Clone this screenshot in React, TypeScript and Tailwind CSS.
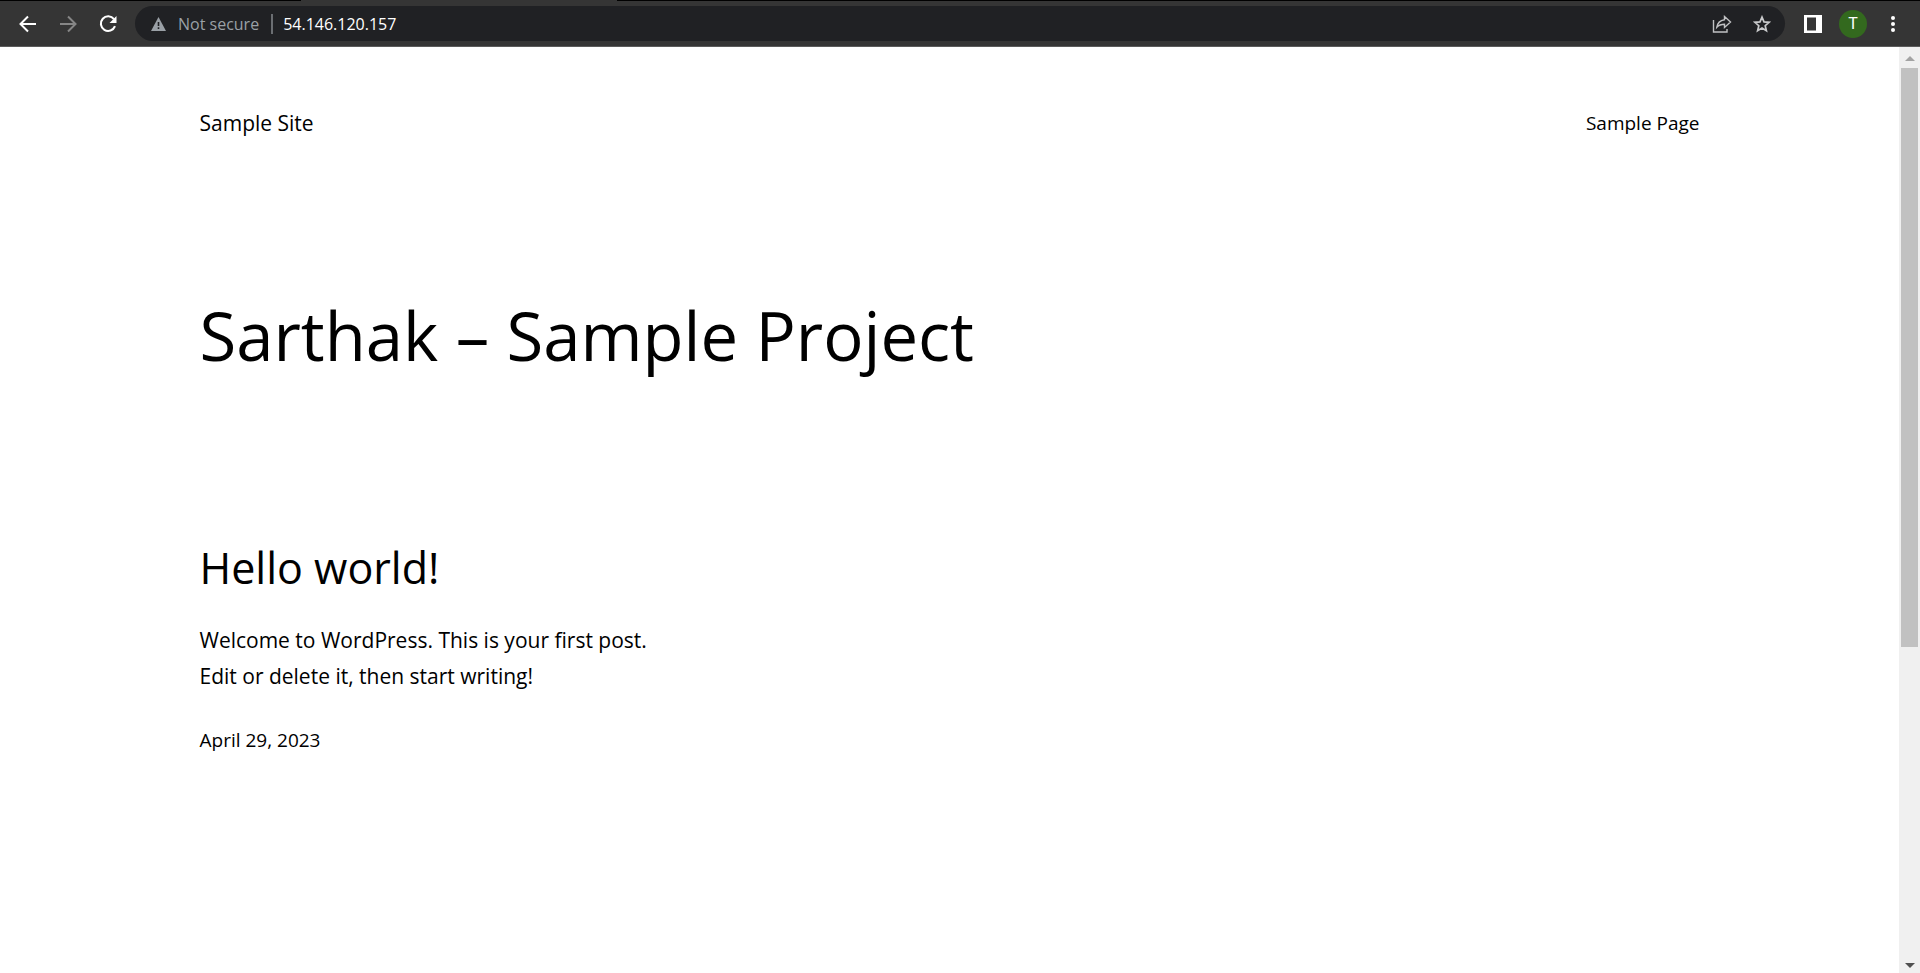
import type { ReactNode } from "react";

function IconButton({ label, children }: { label: string; children: ReactNode }) {
  return (
    <button type="button" aria-label={label} className="flex size-8 items-center justify-center">
      {children}
    </button>
  );
}

function TabStrip() {
  return (
    <div className="flex h-px bg-black">
      <div className="ml-[301px] w-[316px] bg-[#353535]" />
    </div>
  );
}

function Toolbar() {
  return (
    <div className="flex h-[46px] items-center border-b border-[#5b5b5b] bg-[#353535] pr-[11px] pl-3">
      <div className="flex gap-2">
        <IconButton label="Back">
          <svg width="18" height="18" viewBox="0 0 18 18" fill="none" stroke="#fff" strokeWidth="2">
            <path d="M17 9H2M9 1.5 1.5 9 9 16.5" />
          </svg>
        </IconButton>
        <IconButton label="Forward">
          <svg width="18" height="18" viewBox="0 0 18 18" fill="none" stroke="#868686" strokeWidth="2">
            <path d="M1 9h15M9 1.5 16.5 9 9 16.5" />
          </svg>
        </IconButton>
        <IconButton label="Reload">
          <svg width="18" height="18" viewBox="0 0 18 18">
            <path d="M15 4.2A7.3 7.3 0 1 0 16 11.2" fill="none" stroke="#fff" strokeWidth="2.1" />
            <path d="M17.5 1v7h-7z" fill="#fff" />
          </svg>
        </IconButton>
      </div>

      <div className="ml-[11px] flex h-[35px] flex-1 items-center rounded-full bg-[#202124] pr-[7px] pl-4">
        <svg width="15" height="14" viewBox="0 0 15 14" aria-hidden="true">
          <path d="M7.5 0 15 14H0z" fill="#9aa0a6" />
          <path d="M6.7 5h1.6v4H6.7zM6.7 10.3h1.6v1.6H6.7z" fill="#202124" />
        </svg>
        <span className="ml-3 text-[16px] whitespace-nowrap text-[#9aa0a6]">Not secure</span>
        <span className="mr-[10px] ml-3 h-5 w-0.5 bg-[#6b6e72]" />
        <input
          aria-label="Address"
          defaultValue="54.146.120.157"
          className="min-w-0 flex-1 bg-transparent text-[16px] text-white outline-none"
        />
        <div className="flex gap-2">
          <IconButton label="Share this page">
            <svg width="20" height="18" viewBox="0 0 20 18" fill="none" stroke="#c0c1c3" strokeWidth="1.4">
              <path d="M1.5 5v12H15v-3" />
              <path d="M12.5 1.5 18.5 7l-6 5.5V9.3C9.2 9.3 7 10 4.800 12.4 5.4 8.3 8 5.3 12.5 4.7z" />
            </svg>
          </IconButton>
          <IconButton label="Bookmark this page">
            <svg width="18" height="18" viewBox="0 0 18 18" fill="none" stroke="#c8c9cb" strokeWidth="1.7">
              <path d="m9 2.1 2 4.8 5.1.4-3.9 3.4 1.2 5L9 13l-4.4 2.7 1.2-5-3.9-3.4L7 6.9z" />
            </svg>
          </IconButton>
        </div>
      </div>

      <div className="ml-3 flex gap-2">
        <IconButton label="Side panel">
          <svg width="18" height="18" viewBox="0 0 18 18">
            <path d="M0 0h18v18H0zM3 2.500v13h9v-13z" fill="#fff" fillRule="evenodd" />
          </svg>
        </IconButton>
        <IconButton label="Profile">
          <span className="flex size-7 shrink-0 items-center justify-center rounded-full bg-[#33691e] font-[Roboto,sans-serif] text-[16px] text-white">
            T
          </span>
        </IconButton>
        <IconButton label="Menu">
          <svg width="4" height="16" viewBox="0 0 4 16" fill="#fff">
            <circle cx="2" cy="2" r="2" />
            <circle cx="2" cy="8" r="2" />
            <circle cx="2" cy="14" r="2" />
          </svg>
        </IconButton>
      </div>
    </div>
  );
}

function Scrollbar() {
  return (
    <div aria-hidden="true" className="flex w-[21px] shrink-0 flex-col bg-[#f0f0f0] pr-0.5 pl-0.5">
      <div className="flex h-[21px] items-center justify-center pt-0.5">
        <svg width="10" height="5" viewBox="0 0 10 5">
          <path d="M5 0l5 5H0z" fill="#a3a3a3" />
        </svg>
      </div>
      <div className="flex-1">
        <div className="h-[65%] bg-[#c1c1c1]" />
      </div>
      <div className="flex h-[15px] items-center justify-center">
        <svg width="10" height="5" viewBox="0 0 10 5">
          <path d="M0 0h10L5 5z" fill="#505050" />
        </svg>
      </div>
    </div>
  );
}

export default function App() {
  return (
    <div className="flex min-h-screen flex-col bg-white font-['Segoe_UI','Open_Sans',sans-serif] text-black">
      <TabStrip />
      <Toolbar />
      <div className="flex flex-1">
        <div className="flex-1 px-8">
          <div className="mx-auto max-w-[1500px]">
            <header className="flex items-center justify-between pt-[58px]">
              <a href="#home" className="text-[21px] leading-9">Sample Site</a>
              <nav>
                <a href="#sample-page" className="text-[19px] leading-8">Sample Page</a>
              </nav>
            </header>
            <main>
              <h1 className="mt-[152px] text-[67px] leading-[84px]">Sarthak – Sample Project</h1>
              <article className="mt-[161px] max-w-[480px]">
                <h2 className="text-[43px] leading-[60px]">
                  <a href="#hello-world">Hello world!</a>
                </h2>
                <p className="mt-6 text-[21px] leading-9">
                  Welcome to WordPress. This is your first post. Edit or delete it, then start writing!
                </p>
                <a href="#hello-world" className="mt-[30px] block text-[19px] leading-8">
                  <time dateTime="2023-04-29">April 29, 2023</time>
                </a>
              </article>
            </main>
          </div>
        </div>
        <Scrollbar />
      </div>
    </div>
  );
}
